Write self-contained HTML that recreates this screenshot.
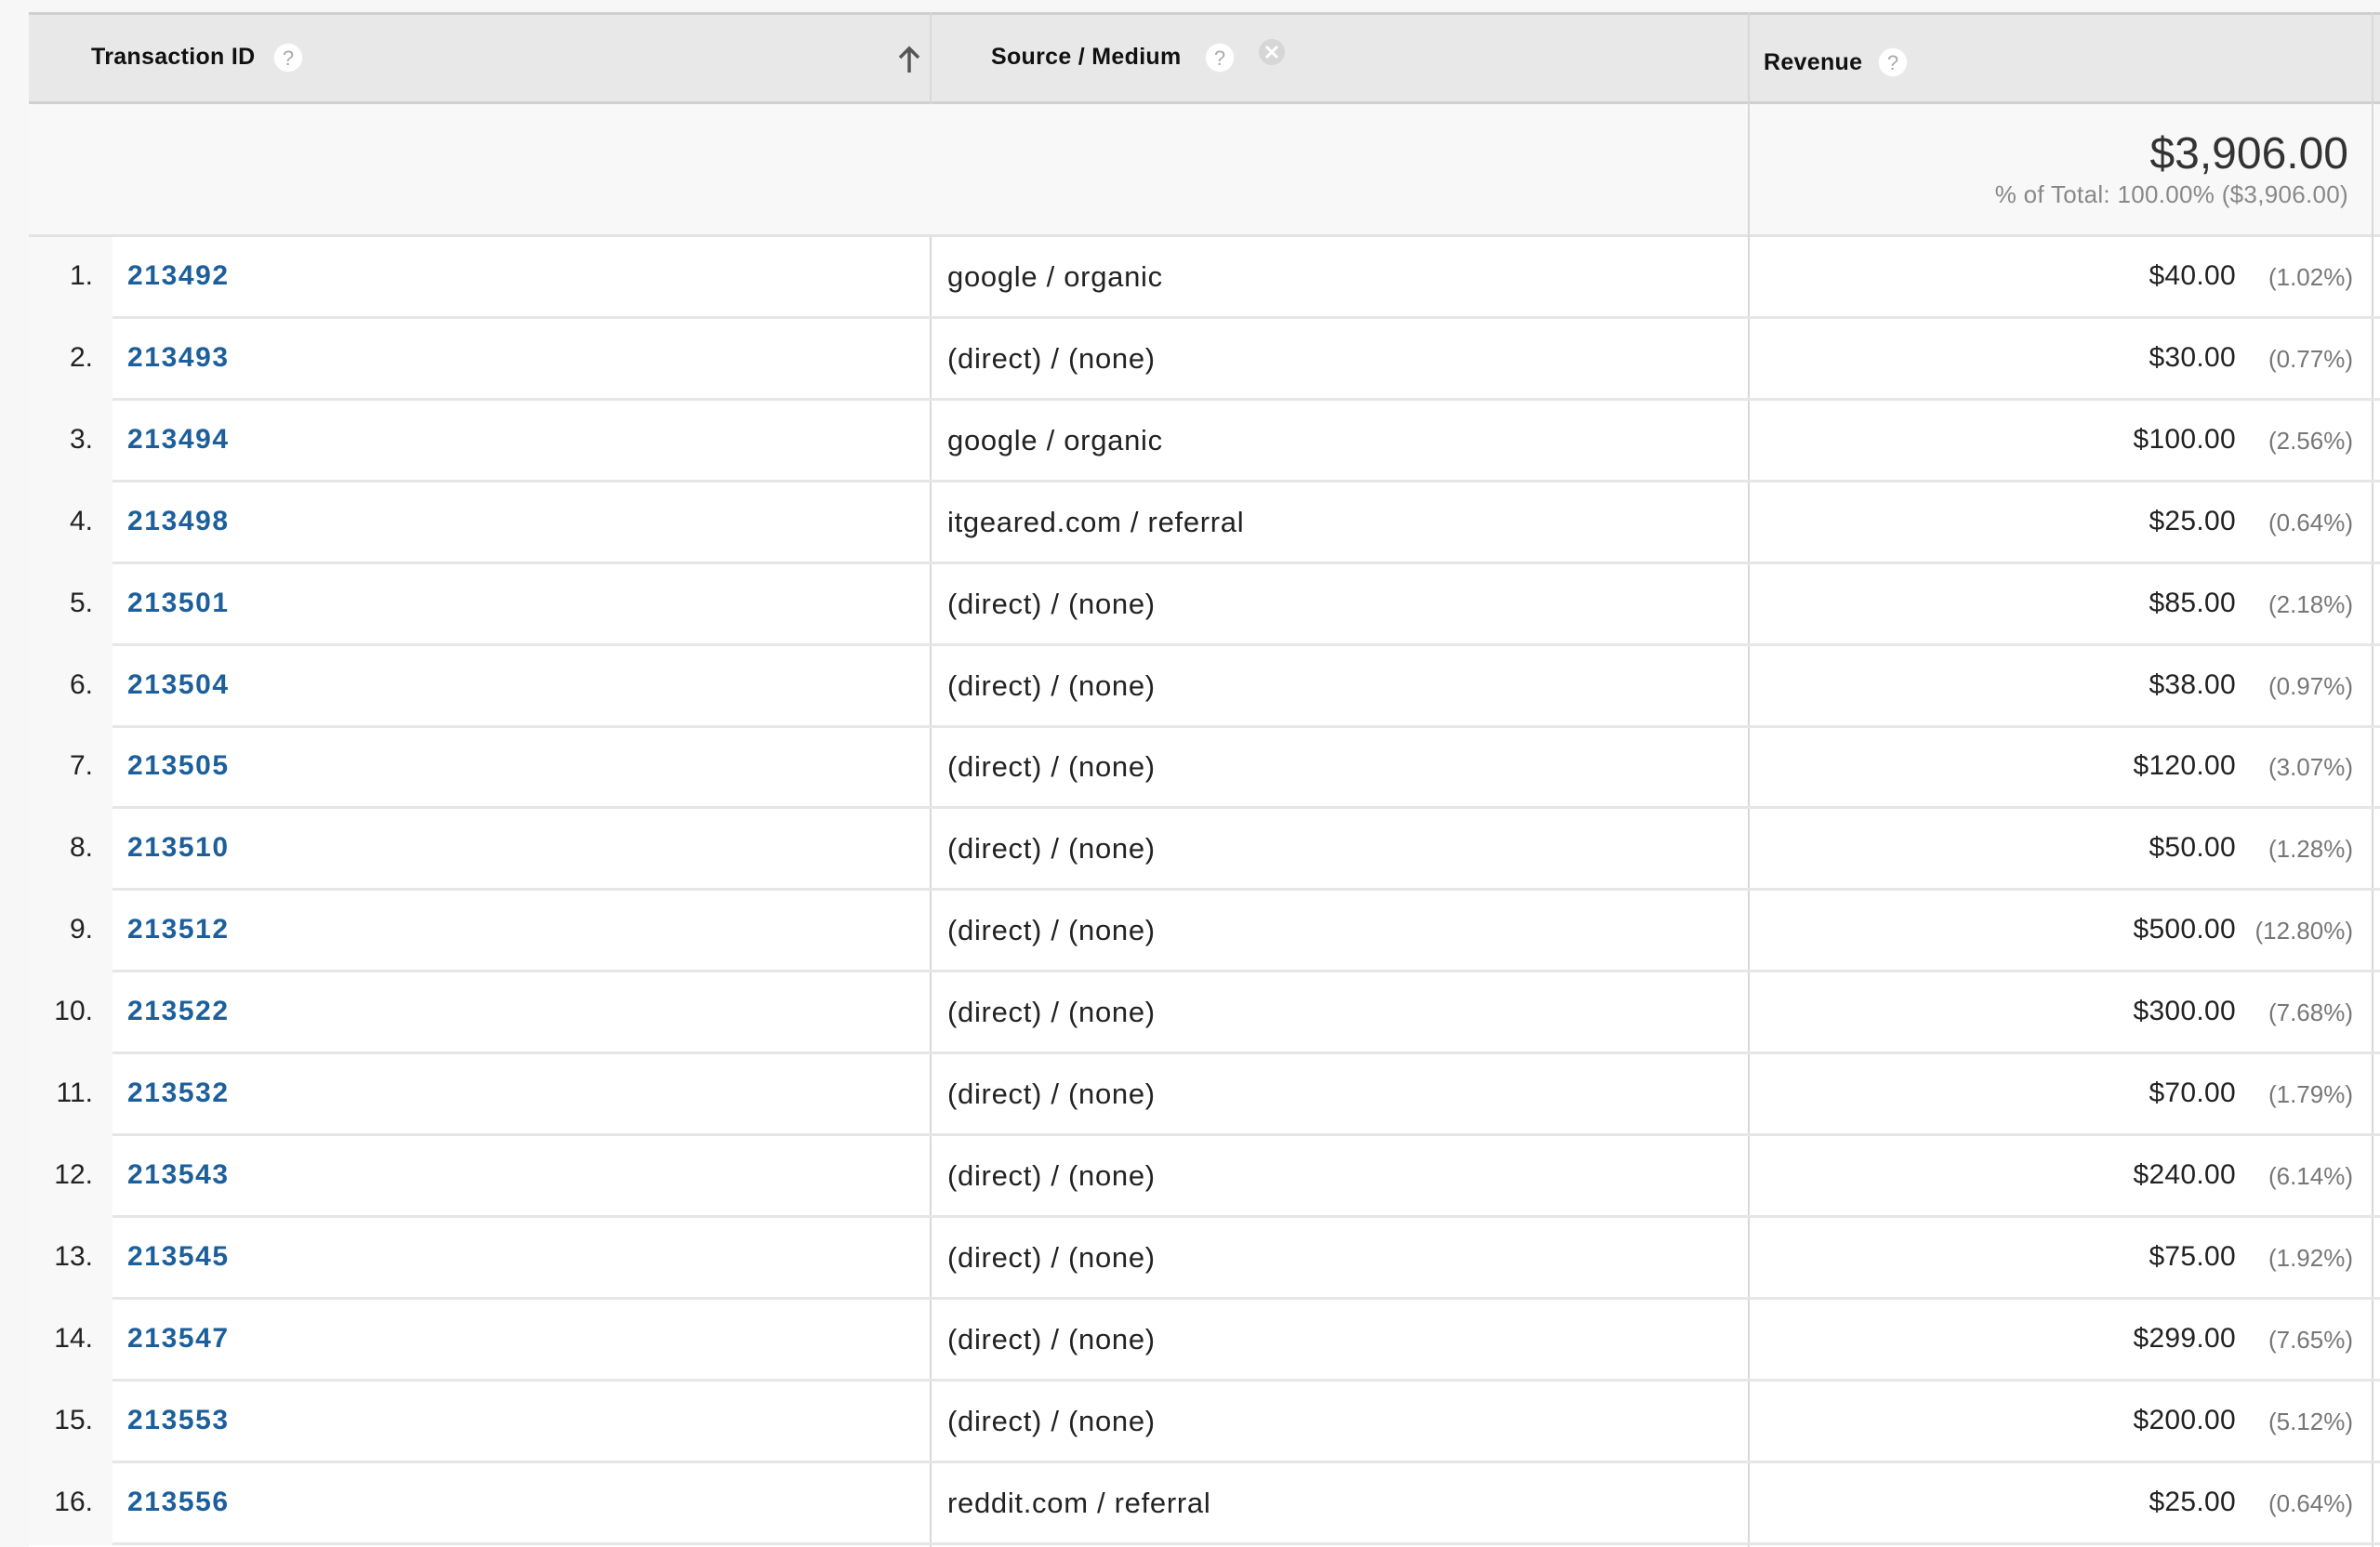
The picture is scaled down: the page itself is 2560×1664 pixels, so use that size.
<!DOCTYPE html>
<html><head><meta charset="utf-8"><style>
*{margin:0;padding:0;box-sizing:border-box}
body{width:2560px;height:1664px;background:#f7f7f7;position:relative;overflow:hidden;font-family:"Liberation Sans",Arial,sans-serif;color:#222}
.abs{position:absolute}
#tbl{left:31px;top:13px;width:2529px;height:1651px;background:#fff;border-top:3px solid #cfcfcf}
.hdr{left:31px;top:13px;width:2529px;height:99px;background:#e8e8e8;border-bottom:3px solid #d0d0d0;border-top:3px solid #cfcfcf}
.sum{left:31px;top:112px;width:2529px;height:143px;background:#f8f8f8;border-bottom:3px solid #e3e3e3}
.vl{width:2px;background:#d8d8d8}
.ht{font-weight:bold;font-size:25px;color:#111;letter-spacing:0.3px}
.q{width:32px;height:32px;border-radius:50%;background:#fff;color:#aaa;font-size:22px;text-align:center;line-height:32px;border:1px solid #ececec}
.row{left:31px;width:2529px;height:88px;border-bottom:3px solid #e6e6e6}
.idx{left:31px;width:90px;height:88px;background:#f8f8f8}
.n{width:70px;text-align:right;font-size:30px;color:#222}
.id{font-size:30px;font-weight:bold;color:#1d5f9b;letter-spacing:1.6px}
.src{font-size:31px;color:#222;letter-spacing:0.7px}
.rev{width:300px;text-align:right;font-size:30px;color:#222;letter-spacing:0.3px}
.pct{width:120px;text-align:right;font-size:26px;color:#777}
</style></head><body>
<div class="abs" id="tbl"></div>
<div class="abs hdr"></div>
<div class="abs sum"></div>
<div class="abs vl" style="left:1000px;top:13px;height:99px"></div>
<div class="abs vl" style="left:1000px;top:255px;height:1409px"></div>
<div class="abs vl" style="left:1880px;top:13px;height:1651px"></div>
<div class="abs vl" style="left:2551px;top:13px;height:1651px"></div>

<div class="abs ht" style="left:98px;top:47px">Transaction ID</div>
<div class="abs q" style="left:294px;top:46px">?</div>
<svg class="abs" style="left:964px;top:48px" width="28" height="32" viewBox="0 0 28 32"><path d="M14 30V4M4 14L14 4L24 14" stroke="#555" stroke-width="3.5" fill="none"/></svg>
<div class="abs ht" style="left:1066px;top:47px">Source / Medium</div>
<div class="abs q" style="left:1296px;top:46px">?</div>
<svg class="abs" style="left:1353px;top:41px" width="30" height="30" viewBox="0 0 30 30"><circle cx="15" cy="15" r="14" fill="#d6d6d6"/><path d="M9 9L21 21M21 9L9 21" stroke="#fff" stroke-width="3"/></svg>
<div class="abs ht" style="left:1897px;top:53px">Revenue</div>
<div class="abs q" style="left:2020px;top:51px">?</div>

<div class="abs" style="right:34px;top:138px;font-size:48px;color:#333">$3,906.00</div>
<div class="abs" style="right:34px;top:194px;font-size:26px;color:#888;letter-spacing:0.3px">% of Total: 100.00% ($3,906.00)</div>

<div id="rows"></div>
<script>
var d=[["213492","google / organic","$40.00","(1.02%)"],["213493","(direct) / (none)","$30.00","(0.77%)"],["213494","google / organic","$100.00","(2.56%)"],["213498","itgeared.com / referral","$25.00","(0.64%)"],["213501","(direct) / (none)","$85.00","(2.18%)"],["213504","(direct) / (none)","$38.00","(0.97%)"],["213505","(direct) / (none)","$120.00","(3.07%)"],["213510","(direct) / (none)","$50.00","(1.28%)"],["213512","(direct) / (none)","$500.00","(12.80%)"],["213522","(direct) / (none)","$300.00","(7.68%)"],["213532","(direct) / (none)","$70.00","(1.79%)"],["213543","(direct) / (none)","$240.00","(6.14%)"],["213545","(direct) / (none)","$75.00","(1.92%)"],["213547","(direct) / (none)","$299.00","(7.65%)"],["213553","(direct) / (none)","$200.00","(5.12%)"],["213556","reddit.com / referral","$25.00","(0.64%)"]];
var h="";
for(var i=0;i<d.length;i++){var t=255+i*87.9;var ty=t+25;
h+='<div class="abs row" style="top:'+t+'px"></div><div class="abs idx" style="top:'+t+'px"></div>';
h+='<div class="abs n" style="left:30px;top:'+ty+'px">'+(i+1)+'.</div>';
h+='<div class="abs id" style="left:137px;top:'+ty+'px">'+d[i][0]+'</div>';
h+='<div class="abs src" style="left:1019px;top:'+ty+'px">'+d[i][1]+'</div>';
h+='<div class="abs rev" style="left:2105px;top:'+ty+'px">'+d[i][2]+'</div>';
h+='<div class="abs pct" style="left:2411px;top:'+(ty+3)+'px">'+d[i][3]+'</div>';}
document.getElementById("rows").innerHTML=h;
</script>
</body></html>
